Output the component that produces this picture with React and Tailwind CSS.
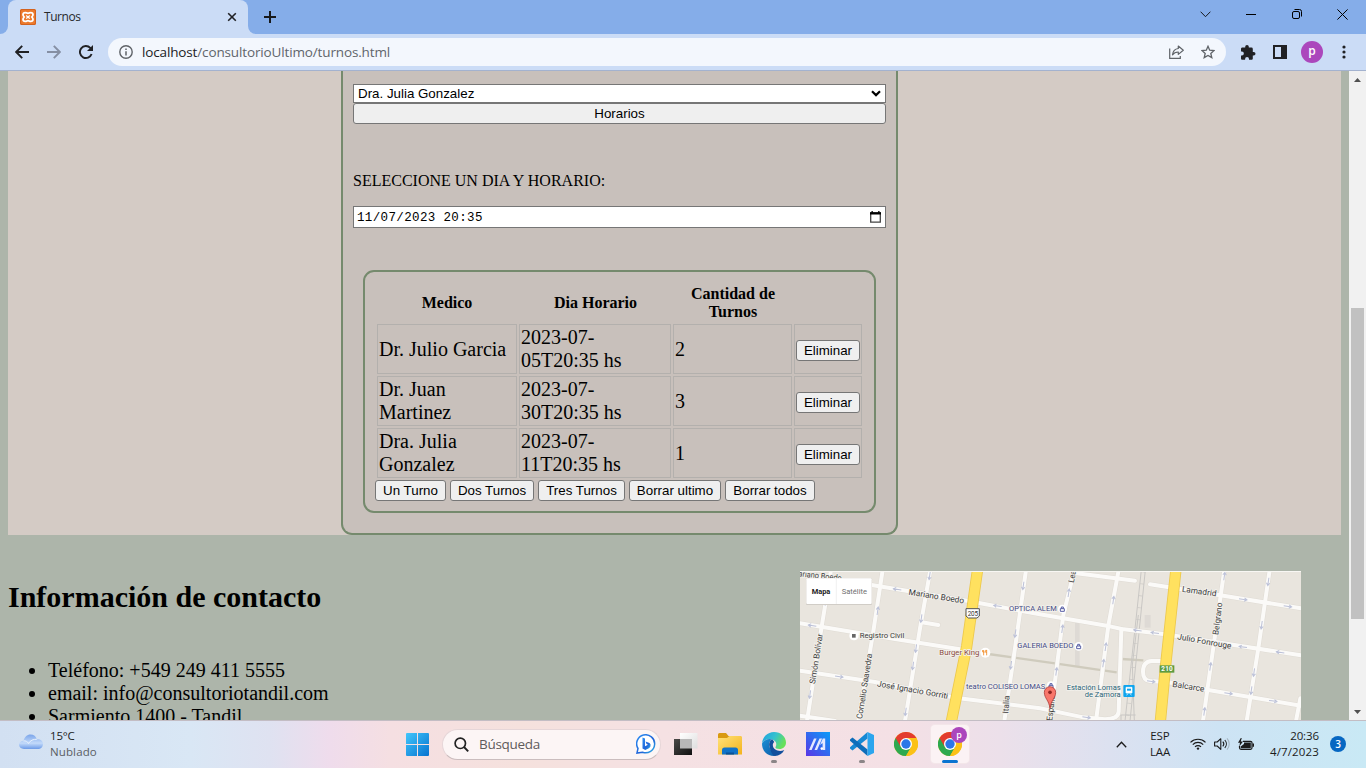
import React from "react";

const UI = "font-['Open_Sans','Noto_Sans',sans-serif]";
const SERIF = "font-['Liberation_Serif',serif]";

function NativeButton({ children, className = "" }) {
  return (
    <button
      className={`h-[21px] shrink-0 rounded-[3px] border border-[#767676] bg-[#efefef] text-center font-['Liberation_Sans',sans-serif] text-[13.333px] leading-[19px] whitespace-nowrap text-black ${className}`}
    >
      {children}
    </button>
  );
}

function Favicon() {
  return (
    <svg className="h-4 w-4" viewBox="0 0 16 16">
      <rect width="16" height="16" rx="1.5" fill="#ec7a2c" />
      <rect x="0.5" y="0.5" width="15" height="15" rx="1.5" fill="none" stroke="#d2621f" />
      <path
        d="M5.300 3.600C3.900 3.600 3 4.500 3 5.700c0 .9.500 1.500 1.200 2.300C3.500 8.800 3 9.400 3 10.300c0 1.200.9 2.100 2.300 2.100 1 0 1.700-.7 2.700-.7s1.700.7 2.700.7c1.400 0 2.300-.9 2.300-2.100 0-.9-.5-1.500-1.200-2.300.7-.8 1.200-1.400 1.200-2.300 0-1.200-.9-2.100-2.300-2.100-1 0-1.700.7-2.700.7s-1.700-.7-2.700-.7z"
        fill="none"
        stroke="#fff"
        strokeWidth="1.800"
      />
      <path d="M6.200 6.500l1 1h1.600l1-1M6.200 9.600l1-1h1.600l1 1M8 7.400v1.300" stroke="#fff" strokeWidth="1.200" fill="none" />
    </svg>
  );
}

function TabStrip() {
  return (
    <div className="flex h-[34px] shrink-0 items-stretch bg-[#85ade9]">
      <div className="flex w-2 items-end bg-[#cbdcf6]">
        <div className="h-full w-full rounded-br-lg bg-[#85ade9]" />
      </div>
      <div className="flex w-[240px] items-center rounded-t-lg bg-[#cbdcf6] pl-3">
        <Favicon />
        <span className={`ml-2 flex-1 text-[12px] tracking-[-0.45px] text-[#27292c] ${UI}`}>Turnos</span>
        <svg className="mr-[11px] h-[10px] w-[10px]" viewBox="0 0 10 10">
          <path d="M1.200 1.200l7.600 7.600M8.800 1.200L1.200 8.800" stroke="#202124" strokeWidth="1.600" />
        </svg>
      </div>
      <div className="w-2 bg-[#cbdcf6]">
        <div className="h-full w-full rounded-bl-lg bg-[#85ade9]" />
      </div>
      <svg className="mt-[11px] ml-2 h-3 w-3" viewBox="0 0 12 12">
        <path d="M6 0v12M0 6h12" stroke="#17191c" strokeWidth="2" />
      </svg>
      <div className="flex-1" />
      <svg className="mt-[11px] mr-[35px] h-[7px] w-[11px]" viewBox="0 0 11 7">
        <path d="M.6.700l4.900 5 4.900-5" fill="none" stroke="#17191c" strokeWidth="1" />
      </svg>
      <svg className="mt-[14px] mr-9 h-[1px] w-[10px]" viewBox="0 0 10 1">
        <path d="M0 .5h10" stroke="#000" />
      </svg>
      <svg className="mt-[9px] mr-[35px] h-[10px] w-[10px]" viewBox="0 0 10 10">
        <rect x=".5" y="2.500" width="7" height="7" rx="1.500" fill="none" stroke="#000" />
        <path d="M2.500.5h5a2 2 0 0 1 2 2v5" fill="none" stroke="#000" />
      </svg>
      <svg className="mt-[9px] mr-[18px] h-[11px] w-[11px]" viewBox="0 0 11 11">
        <path d="M.4.400l10.200 10.200M10.600.4L.4 10.600" stroke="#000" strokeWidth="1" />
      </svg>
    </div>
  );
}

function Toolbar() {
  return (
    <div className="flex h-[37px] shrink-0 items-center border-b border-[#a3b2cf] bg-[#cbdcf6] pl-[15px]">
      <svg className="h-[14px] w-[14px]" viewBox="0 0 14 14">
        <path d="M14 7H1.500M7.200.900L1.200 7l6 6.100" fill="none" stroke="#202124" strokeWidth="1.900" />
      </svg>
      <svg className="ml-[18px] h-[14px] w-[14px]" viewBox="0 0 14 14">
        <path d="M0 7h12.500M6.800.900l6 6.100-6 6.100" fill="none" stroke="#858fa3" strokeWidth="1.900" />
      </svg>
      <svg className="ml-[18px] h-[14px] w-[14px]" viewBox="0 0 14 14">
        <path d="M12.600 9A6 6 0 1 1 11.300 2.900L12.800 4.600" fill="none" stroke="#202124" strokeWidth="1.900" />
        <path d="M14 0v6H8z" fill="#202124" />
      </svg>
      <div className="ml-[15px] flex h-7 w-[1118px] items-center rounded-full bg-[#f3f7fd] pl-[11px]">
        <svg className="h-[14px] w-[14px]" viewBox="0 0 14 14">
          <circle cx="7" cy="7" r="6.200" fill="none" stroke="#5f6368" strokeWidth="1.400" />
          <path d="M7 6.200v4.300M7 3.400v1.500" stroke="#5f6368" strokeWidth="1.500" />
        </svg>
        <span className={`ml-[9px] flex-1 text-[13.500px] tracking-[-0.14px] text-[#60656b] ${UI}`}>
          <span className="text-[#202124]">localhost</span>/consultorioUltimo/turnos.html
        </span>
        <svg className="mr-[17px] h-[14px] w-[15px]" viewBox="0 0 15 14">
          <path d="M.7 3.500v9.800h10.600V11" fill="none" stroke="#5f6368" strokeWidth="1.200" />
          <path d="M9.300 1l5 4.200-5 4.200V7C6.500 7 4.700 8 3.500 9.800 3.900 6.500 5.800 4 9.300 3.500z" fill="none" stroke="#5f6368" strokeWidth="1.200" strokeLinejoin="round" />
        </svg>
        <svg className="mr-[11px] h-[14px] w-[14px]" viewBox="0 0 14 14">
          <path d="M7 1.300l1.700 3.900 4.300.4-3.200 2.800 1 4.200L7 10.400l-3.800 2.200 1-4.200L1 5.600l4.300-.4z" fill="none" stroke="#5f6368" strokeWidth="1.300" />
        </svg>
      </div>
      <svg className="ml-[15px] h-[15px] w-[15px]" viewBox="0 0 15 15">
        <path
          d="M12.700 7h-.9V4a1.400 1.400 0 0 0-1.400-1.400H7.800v-.8a1.800 1.800 0 0 0-3.600 0v.8H1.400C.6 2.600 0 3.200 0 4v2.600h.9a1.900 1.900 0 0 1 0 3.900H0v2.900c0 .7.600 1.400 1.400 1.400h2.700V14a1.900 1.900 0 0 1 3.900 0v.8h2.400c.8 0 1.400-.7 1.400-1.400v-2.800h.9a1.800 1.800 0 0 0 0-3.600z"
          fill="#202124"
        />
      </svg>
      <svg className="ml-[17px] h-[14px] w-[14px]" viewBox="0 0 14 14">
        <path d="M0 0h14v14H0zM2 2v10h6V2z" fill="#202124" fillRule="evenodd" />
      </svg>
      <div className={`ml-[14px] flex h-[22px] w-[22px] items-center justify-center rounded-full bg-[#ab47bc] pb-[2px] text-[12px] leading-none font-semibold text-white ${UI}`}>
        p
      </div>
      <svg className="ml-[19px] h-[14px] w-[4px]" viewBox="0 0 4 14">
        <circle cx="2" cy="2" r="1.600" fill="#202124" />
        <circle cx="2" cy="7" r="1.600" fill="#202124" />
        <circle cx="2" cy="12" r="1.600" fill="#202124" />
      </svg>
    </div>
  );
}

const turnos = [
  ["Dr. Julio Garcia", "2023-07-05T20:35 hs", "2"],
  ["Dr. Juan Martinez", "2023-07-30T20:35 hs", "3"],
  ["Dra. Julia Gonzalez", "2023-07-11T20:35 hs", "1"],
];

function TurnosTable() {
  return (
    <table className="w-[489px] table-fixed border-separate border-spacing-[2px]">
      <colgroup>
        <col className="w-[140px]" />
        <col className="w-[152px]" />
        <col className="w-[119px]" />
        <col className="w-[68px]" />
      </colgroup>
      <thead>
        <tr className="text-[16px] leading-[18px] font-bold">
          <th className="p-[1px]">Medico</th>
          <th className="p-[1px] pl-[2px]">Dia Horario</th>
          <th className="p-[1px] pl-[2px]">
            Cantidad de
            <br />
            Turnos
          </th>
          <th />
        </tr>
      </thead>
      <tbody>
        {turnos.map(([medico, dia, cantidad]) => (
          <tr key={dia} className="h-[50px] text-[20px] leading-[23px]">
            <td className="border border-[#b3b0ad] p-[1px] align-middle">{medico}</td>
            <td className="border border-[#b3b0ad] p-[1px] align-middle">
              {dia.slice(0, 8)}
              <br />
              {dia.slice(8)}
            </td>
            <td className="border border-[#b3b0ad] p-[1px] align-middle">{cantidad}</td>
            <td className="border border-[#b3b0ad] p-[1px] align-middle">
              <NativeButton className="mt-[3px] block w-16">Eliminar</NativeButton>
            </td>
          </tr>
        ))}
      </tbody>
    </table>
  );
}

function FormPanel() {
  return (
    <div className="flex h-[464px] w-[557px] flex-col rounded-b-[11px] border-2 border-t-0 border-[#758a6d] bg-[#c8c0bb] px-[10px] pt-[13px]">
      <div className="flex h-[19px] shrink-0 items-center border border-[#767676] bg-white pr-[4px] pl-1 font-['Liberation_Sans',sans-serif] text-[13.333px] leading-[17px]">
        <span className="flex-1">Dra. Julia Gonzalez</span>
        <svg className="h-[7px] w-[10px]" viewBox="0 0 10 7">
          <path d="M1 1.200l4 3.900 4-3.900" fill="none" stroke="#000" strokeWidth="2.200" />
        </svg>
      </div>
      <NativeButton>Horarios</NativeButton>
      <p className="mt-12 text-[16px] leading-[18px]">SELECCIONE UN DIA Y HORARIO:</p>
      <div className="mt-4 flex h-[22px] shrink-0 items-center border border-[#767676] bg-white pr-[4px] pl-[3px]">
        <span className="flex-1 pt-[2px] font-['Liberation_Mono',monospace] text-[12.500px] leading-[18px] tracking-[0.36px] whitespace-pre">11/07/2023 20:35</span>
        <svg className="mb-[1px] h-3 w-[11px]" viewBox="0 0 11 12">
          <path d="M.7 2h9.600v9.200H.7z" fill="none" stroke="#444" strokeWidth="1.300" />
          <path d="M0 1.200h11V3.600H0zM1.500 0h1.300v2H1.500zM8.200 0h1.300v2H8.200z" fill="#000" />
        </svg>
      </div>
      <div className="mx-[10px] mt-[42px] flex h-[243px] shrink-0 flex-col rounded-[11px] border-2 border-[#758a6d] p-[10px]">
        <TurnosTable />
        <div className="flex gap-1">
          <NativeButton className="w-[71px]">Un Turno</NativeButton>
          <NativeButton className="w-[84px]">Dos Turnos</NativeButton>
          <NativeButton className="w-[87px]">Tres Turnos</NativeButton>
          <NativeButton className="w-[92px]">Borrar ultimo</NativeButton>
          <NativeButton className="w-[90px]">Borrar todos</NativeButton>
        </div>
      </div>
    </div>
  );
}

const streets = [
  "M15 26L130 44L230 60L520 108L735 148L935 182L980 192L1110 208L1518 271",
  "M15 175L300 222L495 253",
  "M15 317L240 351L480 398L735 430L865 457L930 463Q970 462 971 440L979 192",
  "M15 452L120 468",
  "M380 172L430 180",
  "M845 25L1020 47",
  "M1065 58L1290 93L1518 130",
  "M1100 288L1070 288Q1044 290 1044 320Q1044 346 1065 348L1120 352L1240 375L1518 422",
  "M108 15L80 185L36 468",
  "M263 15L234 205L190 468",
  "M406 15L375 190L330 468",
  "M693 15L660 250L628 468",
  "M838 15L805 150L765 468",
  "M971 15L940 182L903 468",
  "M1288 15L1256 240L1224 468",
  "M1424 15L1390 250L1355 468",
  "M1516 400L1503 468",
];

const arrows = [
  [307, 73, 188], [52, 182, 188], [132, 335, 8], [608, 123, 188], [1028, 196, 188], [1080, 204, 188],
  [1344, 246, 188], [1456, 262, 188], [1344, 103, 8], [1478, 124, 8], [1068, 349, 8], [1300, 385, 8],
  [1434, 408, 8], [874, 457, 8], [92, 110, -82], [248, 138, -82], [45, 388, 98], [404, 32, 98],
  [379, 160, 98], [363, 250, 98], [354, 302, 98], [332, 440, 98], [685, 62, 98], [661, 205, 98],
  [648, 300, 98], [821, 84, -82], [802, 192, -82], [784, 320, -82], [955, 106, -82], [932, 246, -82],
  [925, 295, -82], [1246, 305, -82], [1228, 440, -82], [1288, 34, -82], [1420, 50, 98], [1400, 180, 98],
  [1377, 322, 98], [1369, 376, 98],
];

function Label({ x, y, r = 0, w, children, ...rest }) {
  return (
    <text x={x} y={y} transform={`rotate(${r} ${x} ${y})`} textLength={w} lengthAdjust="spacingAndGlyphs" {...rest}>
      {children}
    </text>
  );
}

function StreetMap() {
  return (
    <svg
      className="h-[149px] w-[501px] shrink-0 font-['Roboto',sans-serif]"
      viewBox="15 18 1503 447"
      preserveAspectRatio="none"
    >
      <rect x="15" y="18" width="1503" height="447" fill="#e9e5de" />
      <rect x="840" y="165" width="14" height="140" fill="#dedad5" />
      <rect x="1049" y="150" width="18" height="38" fill="#dedad5" />
      <path d="M580 267L780 295L965 322M980 282L1045 286" stroke="#cfcbbd" strokeWidth="7" fill="none" />
      <g stroke="#c9c7c4" strokeWidth="3" fill="none">
        <path d="M1039 15L990 468M1051 15L1005 468M1030 150L1012 300L1018 468" />
        <path d="M1045 20L996 468" strokeWidth="12" strokeDasharray="2 34" />
        <path d="M975 450H1022M978 465V450" />
      </g>
      <g stroke="#dfdbd4" strokeWidth="15" fill="none" strokeLinecap="round">
        {streets.map((d) => <path key={d} d={d} />)}
      </g>
      <g stroke="#fbfaf8" strokeWidth="12" fill="none" strokeLinecap="round">
        {streets.map((d) => <path key={d} d={d} />)}
      </g>
      <g stroke="#bcc1d8" strokeWidth="3" fill="none">
        {arrows.map(([x, y, r]) => (
          <path key={`${x}-${y}`} d="M-12 0H12M4 -5L12 0L4 5" transform={`translate(${x} ${y}) rotate(${r})`} />
        ))}
      </g>
      <path d="M548 12L515 245L469 470M1143 12L1112 300L1096 470" stroke="#ecc84c" strokeWidth="34" fill="none" />
      <path d="M548 12L515 245L469 470M1143 12L1112 300L1096 470" stroke="#ffe15f" strokeWidth="29" fill="none" />

      <g fontSize="25" fill="#3d3d3d" stroke="#f3f1ec" strokeWidth="5" paintOrder="stroke">
        <Label x={10} y={34} r={6} w={130}>ariano Boedo</Label>
        <Label x={340} y={89} r={9} w={168}>Mariano Boedo</Label>
        <Label x={194} y={220} w={134} fontSize="23">Registro Civil</Label>
        <Label x={245} y={364} r={10} w={216}>José Ignacio Gorriti</Label>
        <Label x={60} y={358} r={-81} w={152}>Simón Bolívar</Label>
        <Label x={201} y={463} r={-81} w={198}>Cornelio Saavedra</Label>
        <Label x={640} y={446} r={-86} w={54}>Italia</Label>
        <Label x={772} y={468} r={-84} w={78}>España</Label>
        <Label x={836} y={54} r={-78} w={50}>Lead</Label>
        <Label x={1160} y={80} r={8} w={104}>Lamadrid</Label>
        <Label x={1146} y={223} r={10} w={164}>Julio Fonrouge</Label>
        <Label x={1131} y={365} r={9} w={97}>Balcarce</Label>
        <Label x={1270} y={211} r={-83} w={98}>Belgrano</Label>
        <g fontSize="23">
          <Label x={433} y={271} w={120} fill="#8a4b3c">Burger King</Label>
          <g fill="#434a86">
            <Label x={642} y={139} w={143}>OPTICA ALEM</Label>
            <Label x={667} y={250} w={168}>GALERIA BOEDO</Label>
            <Label x={513} y={371} w={238}>teatro COLISEO LOMAS</Label>
          </g>
          <g fill="#296378">
            <Label x={815} y={374} w={162}>Estación Lomas</Label>
            <Label x={869} y={396} w={108}>de Zamora</Label>
          </g>
        </g>
      </g>

      <circle cx="177" cy="212" r="14" fill="#fff" />
      <rect x="171" y="207" width="11" height="11" fill="#666" />
      <circle cx="571" cy="263" r="15" fill="#fff" />
      <path d="M566 255v16M575 255v16M563 255v6h6M575 256h-3v6h3" stroke="#f08a24" strokeWidth="2.500" fill="none" />
      {[[802, 132], [851, 244], [768, 362]].map(([x, y]) => (
        <g key={x} transform={`translate(${x} ${y})`}>
          <circle r="13" fill="#fff" />
          <path d="M-6 -1H6V7H-6zM-3 -1V-6H3V-1" fill="none" stroke="#5960a5" strokeWidth="3" />
        </g>
      ))}
      <path d="M513 131H553V153L546 159H520L513 153z" fill="#fff" stroke="#555" strokeWidth="3" strokeLinejoin="round" />
      <text x="518" y="153" fontSize="19" fill="#333" textLength="31">205</text>
      <rect x="1094" y="301" width="44" height="22" fill="#5f9c41" />
      <text x="1099" y="319" fontSize="19" fontWeight="700" fill="#fff" textLength="34">210</text>
      <rect x="985" y="360" width="34" height="36" rx="3" fill="#0fa5ee" />
      <path d="M993 367h18v17h-18zM995 391l4-6M1009 391l-4-6" fill="#fff" stroke="#fff" strokeWidth="2" />
      <path d="M996 371h12v6h-12z" fill="#0fa5ee" />
      <path d="M765 431C762 405 748 400 748 382A17 17 0 0 1 782 382C782 400 768 405 765 431Z" fill="#f8766a" stroke="#ae3b37" strokeWidth="2.500" />
      <circle cx="765" cy="382" r="5.500" fill="#8e2421" />

      <rect x="33" y="40" width="198" height="80" rx="3" fill="#d1cdc7" />
      <rect x="34" y="40" width="196" height="77" rx="3" fill="#fff" />
      <path d="M124 40V117" stroke="#e8e8e8" strokeWidth="2" />
      <Label x={50} y={86} w={56} fontSize="23" fontWeight="700" fill="#222">Mapa</Label>
      <Label x={140} y={86} w={76} fontSize="23" fill="#707070">Satélite</Label>
      <path d="M15 19.500H1518" stroke="#f8f7f4" strokeWidth="3" />
    </svg>
  );
}

function Scrollbar() {
  return (
    <div className="flex w-[17px] shrink-0 flex-col items-center bg-[#f1f1f1]">
      <div className="flex h-[17px] items-center justify-center">
        <svg className="h-1 w-[7px]" viewBox="0 0 7 4"><path d="M0 4L3.500 0L7 4z" fill="#505050" /></svg>
      </div>
      <div className="mt-[220px] h-[311px] w-[13px] bg-[#c1c1c1]" />
      <div className="flex-1" />
      <div className="flex h-[17px] items-center justify-center">
        <svg className="h-1 w-[7px]" viewBox="0 0 7 4"><path d="M0 0L3.500 4L7 0z" fill="#505050" /></svg>
      </div>
    </div>
  );
}

function Page() {
  return (
    <div className="flex h-[649px] shrink-0 overflow-hidden">
      <div className={`flex flex-1 flex-col bg-[#adb5aa] pl-2 text-black ${SERIF}`}>
        <main className="mr-2 flex h-[464px] shrink-0 bg-[#d4cbc5] pl-[333px]">
          <FormPanel />
        </main>
        <footer className="flex justify-between pt-9 pr-12">
          <section>
            <h2 className="mt-[9px] text-[30px] leading-[34px] font-bold whitespace-nowrap">Información de contacto</h2>
            <ul className="mt-[45px] list-disc pl-10 text-[20px] leading-[23px] whitespace-nowrap">
              <li>Teléfono: +549 249 411 5555</li>
              <li>email: info@consultoriotandil.com</li>
              <li>Sarmiento 1400 - Tandil</li>
            </ul>
          </section>
          <StreetMap />
        </footer>
      </div>
      <Scrollbar />
    </div>
  );
}

function ChromeLogo() {
  return (
    <svg className="h-6 w-6 shrink-0" viewBox="0 0 24 24">
      <circle cx="12" cy="12" r="12" fill="#fbc116" />
      <path d="M12 12L1.600 6A12 12 0 0 0 12 24L17.200 15z" fill="#2da94f" />
      <path d="M1.600 6A12 12 0 0 1 22.400 6H12L6.800 15z" fill="#e33b2e" />
      <path d="M22.400 6A12 12 0 0 1 12 24L17.200 15L12 6z" fill="#fbc116" />
      <circle cx="12" cy="12" r="6" fill="#fff" />
      <circle cx="12" cy="12" r="4.700" fill="#2b76e8" />
    </svg>
  );
}

function TaskIcons() {
  return (
    <>
      <svg className="ml-[13px] h-6 w-6" viewBox="0 0 24 24">
        <defs>
          <linearGradient id="tvDark" x2="1" y2="1"><stop stopColor="#4a4a48" /><stop offset="1" stopColor="#111" /></linearGradient>
          <linearGradient id="tvLight" x2="1" y2="1"><stop stopColor="#fff" /><stop offset="1" stopColor="#dedede" /></linearGradient>
        </defs>
        <path d="M6 1h17.500v15.500H6z" fill="url(#tvLight)" />
        <path d="M0 7h18v16H0z" fill="url(#tvDark)" />
        <path d="M6 7h12v9.500H6z" fill="#b8b8b8" />
      </svg>
      <svg className="ml-5 h-6 w-6" viewBox="0 0 24 24">
        <defs><linearGradient id="folder" x2="1" y2="1"><stop stopColor="#ffe27a" /><stop offset="1" stopColor="#f4b31c" /></linearGradient></defs>
        <path d="M0 2.500Q0 1 1.500 1H8l2.500 3H22q1.500 0 1.500 1.500V12H0z" fill="#d99a12" />
        <path d="M0 6H9l2.500-2H22.500Q24 4 24 5.500V22.500H0z" fill="url(#folder)" />
        <path d="M4 22.500V18q0-2.500 2.500-2.500h11Q20 15.500 20 18v4.500z" fill="#1173c8" />
        <path d="M8 22.500v-2h8v2z" fill="#0a5299" />
      </svg>
      <div className="ml-5 flex h-full w-6 flex-col items-center pt-[11px]">
        <svg className="h-6 w-6 shrink-0" viewBox="0 0 24 24">
          <defs>
            <linearGradient id="edgeTop" x2="1" y2=".4"><stop stopColor="#1e9fe0" /><stop offset=".55" stopColor="#35c1cf" /><stop offset="1" stopColor="#66e05a" /></linearGradient>
            <linearGradient id="edgeBottom" x2="1" y2="1"><stop stopColor="#1b8fd6" /><stop offset="1" stopColor="#0c59a4" /></linearGradient>
          </defs>
          <path d="M0 11.500C.5 5 5.500 0 12 0c7 0 12 5 12 10.500 0 4-3 6.500-6.500 6.500-3 0-4.500-1-4-2 1.500-2 1-5.500-2-7C7.500 6 2 7.500 0 11.500z" fill="url(#edgeTop)" />
          <path d="M0 11.500C2 7.500 7 6 10.500 7.500 8 8 6.500 11 7.500 14.500c1 4 4 7 8.500 7.500-1.200.6-2.500 1.500-4 2C5 24 0 19 0 11.500z" fill="url(#edgeBottom)" />
          <path d="M10.500 7.500C8 8 6.500 11 7.500 14.500 9 21 11 23.500 13 24c4-.2 7.500-2.500 9.300-6-5 2.500-11.500 0-11.500-5 0-1.500.7-2.500 1.500-3z" fill="#124f9c" />
        </svg>
        <span className="mt-1 h-[3px] w-[6px] shrink-0 rounded-full bg-[#8b8587]" />
      </div>
      <svg className="ml-5 h-6 w-6" viewBox="0 0 24 24">
        <defs><linearGradient id="ma" x1="0" y1="1" x2="1" y2="0"><stop stopColor="#5a35e6" /><stop offset="1" stopColor="#0a9df8" /></linearGradient></defs>
        <path d="M0 0h24v24H0z" fill="url(#ma)" />
        <path d="M3 18L8 6.500h2.600L5.600 18zM8.500 18l5-11.500h2.600L11.100 18z" fill="#e3e8ff" />
        <path d="M16.600 6.500h2.600V18h-2.600zM14 13l2.600-6V11z" fill="#e3e8ff" />
        <circle cx="15.800" cy="16.600" r="1.300" fill="#fff" />
      </svg>
      <div className="ml-5 flex h-full w-6 flex-col items-center pt-[11px]">
        <svg className="h-6 w-6 shrink-0" viewBox="0 0 24 24">
          <path d="M17.500 0v6.500L2.500 18.500 0 16.500V15.200z" fill="#1789d4" />
          <path d="M17.500 24v-6.500L2.500 5.500 0 7.500v1.300z" fill="#0e6dba" />
          <path d="M17.500 0L24 3v18l-6.500 3z" fill="#2ba5ee" />
        </svg>
        <span className="mt-1 h-[3px] w-[6px] shrink-0 rounded-full bg-[#8b8587]" />
      </div>
      <div className="ml-5"><ChromeLogo /></div>
      <div className="relative ml-[13px] flex h-[38px] w-[38px] flex-col items-center rounded-[4px] bg-[#fbf2f4] pt-[7px] shadow-[0_0_0_1px_#f3e6e9]">
        <ChromeLogo />
        <span className={`absolute top-[2px] left-[20px] flex h-4 w-4 items-center justify-center rounded-full bg-[#ab47bc] pb-[2px] text-[9px] leading-none font-semibold text-white ${UI}`}>p</span>
        <span className="mt-[4px] h-[3px] w-4 shrink-0 rounded-full bg-[#0a74d1]" />
      </div>
    </>
  );
}

function Taskbar() {
  return (
    <div className={`flex h-12 shrink-0 items-center border-t border-[#c3bdc4] bg-[linear-gradient(90deg,#d2e0f2_0px,#d9e7f5_190px,#dfe2f1_270px,#efdcec_330px,#f5dfe2_390px,#f5e1dd_520px,#f5e1e3_660px,#f4e0e5_900px,#ece0ea_1000px,#dce1f0_1110px,#cde3f4_1220px,#c9e9f5_1366px)] pb-[1px] ${UI}`}>
      <svg className="ml-[19px] h-6 w-6 -translate-y-[3px]" viewBox="0 0 24 24">
        <defs><linearGradient id="cloud" x2="0" y2="1"><stop stopColor="#7ba5ea" /><stop offset=".6" stopColor="#c3dafa" /><stop offset="1" stopColor="#6d9be8" /></linearGradient></defs>
        <path d="M5 20C2 20 0 18 0 15.800c0-2.300 2-4 4.500-4C5.500 8 8 5.500 11.500 5.500c3.300 0 5.500 2 6.300 4.800C21.500 10 24 12 24 15c0 3-2.300 5-5 5z" fill="url(#cloud)" />
        <path d="M4.500 12c2-.5 4 .5 5 2.500 1.500-3 5-4.500 8.300-4.200" stroke="#e7f1fd" strokeWidth="1" fill="none" />
      </svg>
      <div className="ml-[7px] w-[120px] text-[11.500px] leading-[16px]">
        <div className="tracking-[-0.2px] text-[#1b1b1b]">15°C</div>
        <div className="tracking-[0.12px] text-[#5a5d63]">Nublado</div>
      </div>
      <svg className="ml-[236px] h-[23px] w-[23px]" viewBox="0 0 23 23">
        <defs><linearGradient id="win" x2="1" y2="1"><stop stopColor="#42c6fb" /><stop offset="1" stopColor="#0673d0" /></linearGradient></defs>
        <path d="M0 1q0-1 1-1h10v11H0zM12 0h10q1 0 1 1v10H12zM0 12h11v11H1q-1 0-1-1zM12 12h11v10q0 1-1 1H12z" fill="url(#win)" />
      </svg>
      <div className="ml-[13px] flex h-[31px] w-[219px] items-center rounded-full border border-[#e6d6d8] border-b-[#cbbdbe] bg-[#fcf5f5] pl-[11px]">
        <svg className="h-[15px] w-[15px]" viewBox="0 0 15 15">
          <circle cx="6.300" cy="6.300" r="5.200" fill="none" stroke="#222" strokeWidth="1.700" />
          <path d="M10 10l4.200 4.300" stroke="#222" strokeWidth="1.900" />
        </svg>
        <span className="ml-[10px] flex-1 text-[13.500px] tracking-[-0.3px] text-[#5f5b5c]">Búsqueda</span>
        <svg className="mr-[4px] h-5 w-5" viewBox="0 0 20 20">
          <defs><linearGradient id="bing" x2="1" y2="1"><stop stopColor="#2d8ef2" /><stop offset=".6" stopColor="#1f63d8" /><stop offset="1" stopColor="#33b7e8" /></linearGradient></defs>
          <path d="M1 19l1-4.500A9 9 0 1 1 6.500 18.200z" fill="#fff" stroke="url(#bing)" strokeWidth="1.500" />
          <path d="M6.500 3.500l2.500 1v7.800l3-1.500-1.500-.8-1-2.400 4 1.500q1.500.8 1 3c-.2 1-.8 1.600-1.600 2.100L9.300 16l-2.800-1.600z" fill="url(#bing)" />
        </svg>
      </div>
      <TaskIcons />
      <div className="flex-1" />
      <svg className="mr-[22px] h-[7px] w-[11px]" viewBox="0 0 11 7">
        <path d="M.8 6.200l4.700-5 4.700 5" fill="none" stroke="#1b1b1b" strokeWidth="1.300" />
      </svg>
      <div className="w-[22px] text-center text-[11.500px] leading-[16px] tracking-[-0.1px] text-[#1b1b1b]">
        <div>ESP</div>
        <div>LAA</div>
      </div>
      <svg className="ml-[19px] h-3 w-4" viewBox="0 0 16 12">
        <g fill="none" stroke="#1b1b1b" strokeWidth="1.200">
          <path d="M.5 4.400a10.500 10.500 0 0 1 15 0M2.800 6.600a7.300 7.300 0 0 1 10.400 0M5 8.800a4.200 4.200 0 0 1 6 0" />
        </g>
        <circle cx="8" cy="10.600" r="1.200" fill="#1b1b1b" />
      </svg>
      <svg className="ml-[8px] h-[14px] w-4" viewBox="0 0 16 14">
        <g fill="none" stroke="#1b1b1b" strokeWidth="1.100">
          <path d="M.6 5v4h2.600l3.600 3.300V1.700L3.200 5z" strokeLinejoin="round" />
          <path d="M8.800 4.700a3.400 3.400 0 0 1 0 4.600M10.800 3a6 6 0 0 1 0 8" />
          <path d="M13 1.300a8.500 8.500 0 0 1 0 11.400" stroke="#a5b3bf" />
        </g>
      </svg>
      <svg className="ml-[8px] h-[13px] w-4" viewBox="0 0 16 13">
        <path d="M5 3.300h7.500q1.500 0 1.500 1.500v5q0 1.500-1.500 1.500H3q-1.500 0-1.500-1.500V8" fill="none" stroke="#1b1b1b" strokeWidth="1.200" />
        <path d="M6 4.500h6.800v5.700H2.700V8.500L6 6zM14.500 5.600H16v3.200h-1.500z" fill="#1b1b1b" />
        <path d="M2.800 0L0 4.800h2L1.300 8.500 5 3.500H2.800L3.700 0z" fill="#1b1b1b" />
      </svg>
      <div className="ml-[13px] w-[52px] text-right text-[11.500px] leading-[16px] whitespace-nowrap text-[#1b1b1b]">
        <div className="tracking-[-0.1px]">20:36</div>
        <div className="tracking-[0.15px]">4/7/2023</div>
      </div>
      <div className="mr-5 ml-[11px] flex h-4 w-4 items-center justify-center rounded-full bg-[#0667c2] text-[10px] leading-none font-semibold text-white">3</div>
    </div>
  );
}

export default function App() {
  return (
    <div className="flex h-[768px] w-[1366px] flex-col overflow-hidden">
      <TabStrip />
      <Toolbar />
      <Page />
      <Taskbar />
    </div>
  );
}
